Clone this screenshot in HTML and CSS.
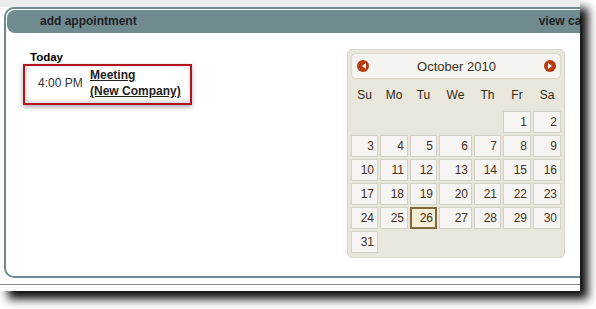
FILE: index.html
```html
<!DOCTYPE html>
<html lang="en">
<head>
  <meta charset="UTF-8" />
  <title>Appointments</title>
  <link rel="stylesheet" href="styles.css">
</head>
<body>
  <div class="shot">
    <div class="topstrip"></div>
    <div class="panel">
      <div class="panel-head">
        <span>add appointment</span>
        <span class="view-link">view calendar</span>
      </div>
      <div class="panel-body">
        <div class="agenda">
          <div class="today">Today</div>
          <div class="event">
            <div class="time">4:00 PM</div>
            <div class="title">
              <a href="#">Meeting</a><br>
              <a href="#">(New Company)</a>
            </div>
          </div>
        </div>

        <div class="cal">
          <div class="cal-head">
            <span class="arrow prev"></span>
            <span class="month">October 2010</span>
            <span class="arrow next"></span>
          </div>
          <div class="cal-grid">
            <div class="dn">Su</div><div class="dn">Mo</div><div class="dn">Tu</div><div class="dn">We</div><div class="dn">Th</div><div class="dn">Fr</div><div class="dn">Sa</div>
            <div></div><div></div><div></div><div></div><div></div>
            <div class="day">1</div><div class="day">2</div>
            <div class="day">3</div><div class="day">4</div><div class="day">5</div><div class="day">6</div><div class="day">7</div><div class="day">8</div><div class="day">9</div>
            <div class="day">10</div><div class="day">11</div><div class="day">12</div><div class="day">13</div><div class="day">14</div><div class="day">15</div><div class="day">16</div>
            <div class="day">17</div><div class="day">18</div><div class="day">19</div><div class="day">20</div><div class="day">21</div><div class="day">22</div><div class="day">23</div>
            <div class="day">24</div><div class="day">25</div><div class="day current">26</div><div class="day">27</div><div class="day">28</div><div class="day">29</div><div class="day">30</div>
            <div class="day">31</div>
          </div>
        </div>
      </div>
    </div>
    <div class="rule"></div>
  </div>
</body>
</html>
```

FILE: styles.css
```css
html, body {
  height: 309px;
}
body {
  margin: 0;
  background: #fff;
  font-family: "Liberation Sans", Arial, sans-serif;
}
.shot {
  width: 580px;
  height: 291px;
  overflow: hidden;
  background: #fff;
  box-shadow: 8px 8px 9px rgba(0, 0, 0, 0.95);
}
.topstrip {
  height: 7px;
  background: #ececec;
}
.panel {
  box-sizing: border-box;
  width: 660px;
  height: 271px;
  margin-left: 4px;
  border: 2px solid #6f8b90;
  border-radius: 10px;
  padding: 1px;
}
.panel-head {
  display: flex;
  height: 23px;
  line-height: 23px;
  padding: 0 33px;
  background: #6f8b90;
  border-radius: 8px 0 0 8px;
  font-size: 12px;
  font-weight: bold;
  color: #1e2224;
}
.view-link {
  margin-left: 402px;
}
.panel-body {
  display: flex;
  padding-top: 16px;
}
.agenda {
  width: 317px;
  padding-left: 23px;
}
.today {
  margin-top: 1px;
  font-size: 11.5px;
  line-height: 14px;
  font-weight: bold;
  color: #000;
}
.event {
  display: flex;
  align-items: center;
  width: 169px;
  height: 41px;
  box-sizing: border-box;
  margin-left: -7px;
  padding: 1px 0 4px 13px;
  border: 2px solid #b3131b;
  box-shadow: 0 2px 5px rgba(0, 0, 0, 0.35), inset 1px -1px 5px rgba(0, 0, 0, 0.22);
}
.time {
  width: 52px;
  font-size: 12px;
  color: #333;
}
.title {
  font-size: 12px;
  line-height: 16px;
  font-weight: bold;
}
.title a {
  color: #222;
}
.cal {
  width: 210px;
  padding: 3px 3px 4px;
  background: #e9e6dc;
  border: 1px solid #d9d5c8;
  border-radius: 5px;
  color: #3a3020;
  font-size: 12px;
}
.cal-head {
  display: flex;
  align-items: center;
  justify-content: space-between;
  box-sizing: border-box;
  height: 26px;
  padding: 0 4px 0 5px;
  background: #f5f4f0;
  border: 1px solid #dcd7ca;
  border-radius: 5px;
}
.month {
  font-size: 13px;
  color: #3a3322;
}
.arrow {
  position: relative;
  width: 12px;
  height: 12px;
  border-radius: 50%;
  background: #b83c0c;
}
.arrow::after {
  content: '';
  position: absolute;
  top: 3px;
  border-style: solid;
  border-width: 3px 4px;
}
.prev::after {
  left: 1px;
  border-color: transparent #fff transparent transparent;
}
.next::after {
  left: 4px;
  border-color: transparent transparent transparent #fff;
}
.cal-grid {
  display: grid;
  grid-template-columns: 27px 28px 27px 33px 27px 28px 28px;
  grid-template-rows: 28px;
  grid-auto-rows: 22px;
  gap: 2px;
  margin-top: 2px;
}
.dn {
  line-height: 28px;
  text-align: center;
  color: #2e2a20;
}
.day {
  box-sizing: border-box;
  padding-right: 3px;
  line-height: 20px;
  text-align: right;
  background: #f6f5f3;
  border: 1px solid #d3d0c8;
  color: #46321a;
}
.day.current {
  background: #f5efd6;
  border: 2px solid #7d6a3a;
  line-height: 18px;
  padding-right: 2px;
}
.rule {
  height: 1px;
  margin-top: 6px;
  background: #8a8a8a;
}
```
